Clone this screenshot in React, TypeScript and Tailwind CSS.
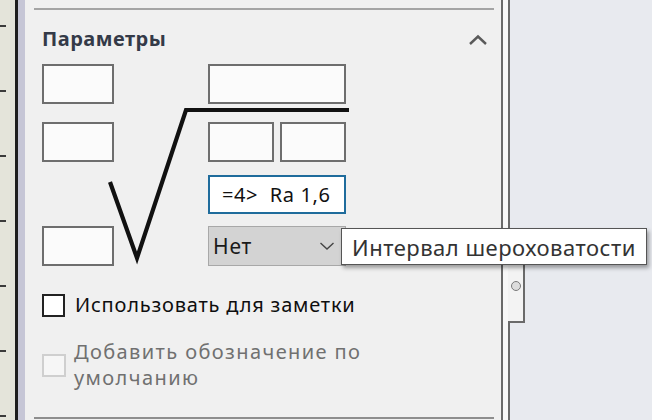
import React from 'react';

const ui = "font-['Noto_Sans','Open_Sans','DejaVu_Sans',sans-serif]";

function Box({ w = 'w-[72px]' }: { w?: string }) {
  return <div className={`${w} h-full border-2 border-[#6e6e6e] bg-[#fbfbfb]`} />;
}

export default function App() {
  const ticks = [0, 1, 2, 3, 4, 5, 6];

  return (
    <div className={`relative flex h-[420px] w-[652px] overflow-hidden bg-[#f0f0f0] ${ui}`}>
      {/* left ruler strip */}
      <div className="flex w-[15px] flex-col gap-[63px] bg-[#e4e4da] pt-[25px]">
        {ticks.map((t) => (
          <div key={t} className="h-[2px] w-[6px] bg-[#3a3a3a]" />
        ))}
      </div>
      <div className="w-[3px] bg-[#1e1e1e]" />
      <div className="w-[7px] bg-[#c6c6d6]" />

      {/* property panel */}
      <div className="flex w-[478px] flex-col border-r-2 border-[#6a6a6a] bg-[#f0f0f0] pt-[8px]">
        <div className="ml-[9px] mr-[7px] h-[2px] bg-[#a4a4a4]" />

        <div className="mt-[16px] flex items-center justify-between pl-[17px] pr-[13px]">
          <span className="text-[20px] font-bold leading-[26px] tracking-[0.5px] text-[#343a48]">Параметры</span>
          <svg width="20" height="12" viewBox="0 0 20 12" className="mt-[2px]">
            <path d="M2 10 L10 2.5 L18 10" fill="none" stroke="#5a5a5a" strokeWidth="2.4" />
          </svg>
        </div>

        {/* roughness symbol fields */}
        <div className="relative mt-[12px] pl-[17px]">
          <div className="flex h-[40px]">
            <Box />
            <div className="ml-[94px] h-full">
              <Box w="w-[138px]" />
            </div>
          </div>
          <div className="mt-[18px] flex h-[40px]">
            <Box />
            <div className="ml-[94px] flex h-full gap-[6px]">
              <Box w="w-[66px]" />
              <Box w="w-[66px]" />
            </div>
          </div>
          <div className="mt-[13px] flex h-[39px]">
            <div className="w-[72px]" />
            <div className="ml-[94px] flex h-full w-[138px] items-center overflow-hidden border-2 border-[#1f6c9c] bg-white pl-[12px]">
              <span className="whitespace-pre text-[20px] leading-none tracking-[0.6px] text-[#111]">=4&gt;  Ra 1,6</span>
            </div>
          </div>
          <div className="mt-[12px] flex h-[40px]">
            <Box />
            <div className="ml-[94px] flex h-full w-[138px] items-center justify-between border border-[#a8a8a8] bg-[#d3d3d3] pl-[4px] pr-[10px]">
              <span className="text-[21px] leading-none tracking-[0.8px] text-[#1a1a1a]">Нет</span>
              <svg width="16" height="10" viewBox="0 0 16 10">
                <path d="M1.5 2 L8 8 L14.5 2" fill="none" stroke="#444" strokeWidth="1.4" />
              </svg>
            </div>
          </div>

          <svg
            className="pointer-events-none absolute left-[17px] top-0"
            width="320"
            height="210"
            viewBox="0 0 320 210"
          >
            <polyline
              points="68,118 95,194 144,46 307,46"
              fill="none"
              stroke="#111"
              strokeWidth="4.2"
              strokeLinejoin="miter"
            />
          </svg>
        </div>

        {/* options */}
        <div className="mt-[27px] flex items-center gap-[10px] pl-[17px]">
          <div className="h-[23px] w-[23px] border-2 border-[#222] bg-white" />
          <span className="text-[20px] leading-[24px] tracking-[0.8px] text-[#0e0e0e]">Использовать для заметки</span>
        </div>
        <div className="mt-[22px] flex items-center gap-[8px] pl-[17px]">
          <div className="h-[23px] w-[24px] border-2 border-[#cfcfcf] bg-[#f6f6f6]" />
          <span className="text-[20px] leading-[26px] tracking-[1.4px] text-[#707070]">
            Добавить обозначение по
            <br />
            умолчанию
          </span>
        </div>

        <div className="mt-auto mb-[1px] ml-[9px] mr-[7px] h-[2px] bg-[#8e8e8e]" />
      </div>

      <div className="w-[5px] bg-[#f8f8f8]" />

      {/* graphics area */}
      <div className="flex flex-1 flex-col bg-[#e8eaef]">
        <div className="h-[262px] border-l-2 border-[#6a6a6a]" />
        <div className="flex h-[61px]">
          <div className="flex w-[17px] justify-center border-b-2 border-r-2 border-[#6a6a6a] bg-[#f3f3f3] pt-[19px]">
            <div className="h-[10px] w-[10px] rounded-full border border-[#7a7a7a] bg-[#dcdcdc]" />
          </div>
        </div>
        <div className="flex-1 border-l-2 border-[#6a6a6a]" />
      </div>

      {/* tooltip */}
      <div className="absolute left-[341px] top-[228px] flex h-[37px] w-[306px] items-center border border-[#555] bg-white pl-[10px] shadow-[2px_3px_4px_rgba(0,0,0,0.35)]">
        <span className="text-[22px] leading-none tracking-[0.5px] text-[#333]">Интервал шероховатости</span>
      </div>
    </div>
  );
}
